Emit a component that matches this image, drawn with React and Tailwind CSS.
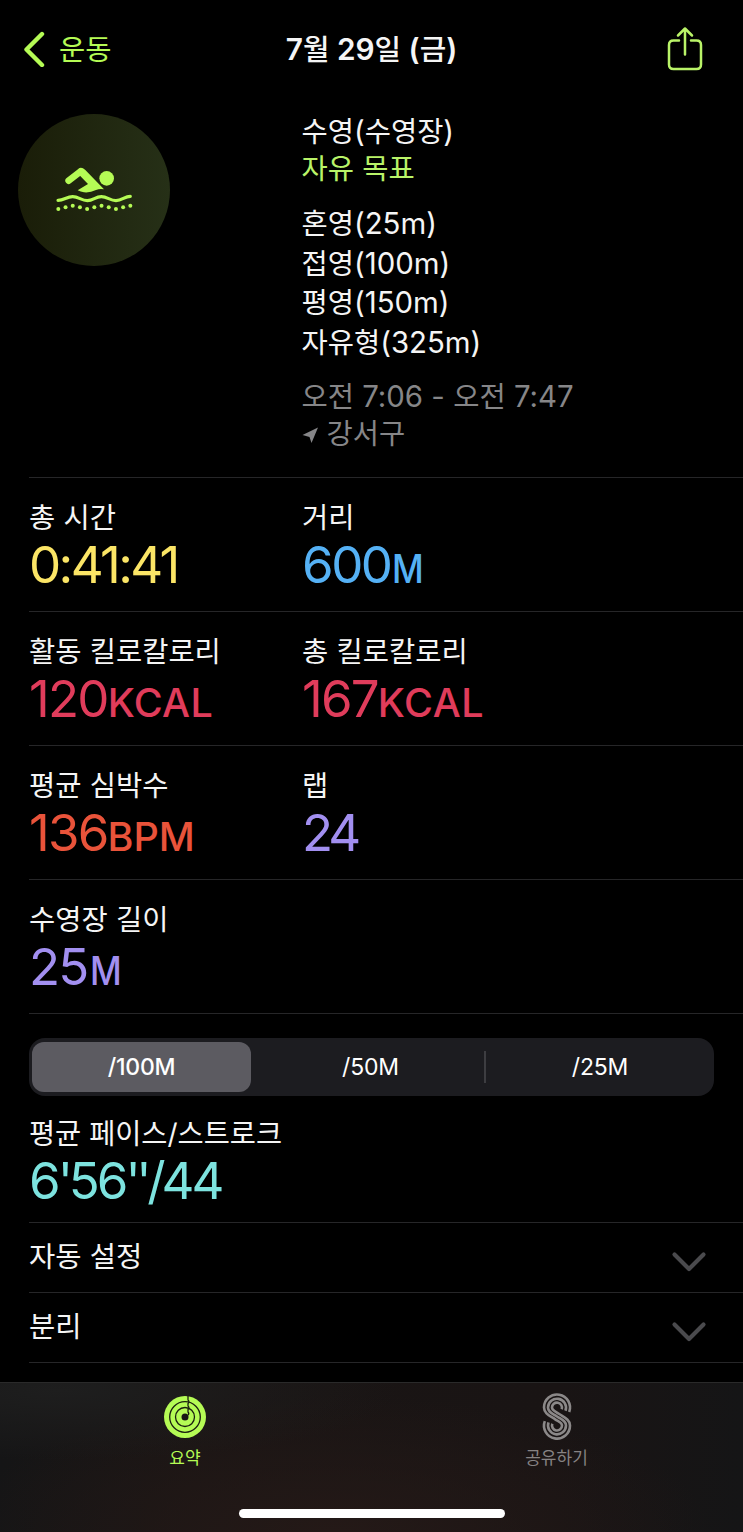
import React from "react";

const HANGUL = /([\u3131-\uD79D]+)/;

// Splits a string so that Hangul and Latin runs each get their own face and size.
function Mixed({ children, ko = "text-[28.5px]", la = "text-[29.4px]" }) {
  return (
    <>
      {children.split(HANGUL).map((part, i) =>
        part === "" ? null : HANGUL.test(part) ? (
          <span key={i} className={`font-['Noto_Sans_CJK_KR',sans-serif] leading-none ${ko}`}>{part}</span>
        ) : (
          <span key={i} className={`leading-none ${la}`}>{part}</span>
        )
      )}
    </>
  );
}

function Line({ children, className = "", ko, la }) {
  return (
    <div className={`h-[40px] whitespace-pre font-['Inter',sans-serif] text-[29px] leading-[40px] ${className}`}>
      <Mixed ko={ko} la={la}>{children}</Mixed>
    </div>
  );
}

function Swimmer() {
  const dots = [174, 169, 164, 169, 174, 169, 164, 169, 174, 169, 164];
  return (
    <svg viewBox="0 0 330 225" className="mb-[4px] ml-[2px] h-[75px] w-[110px]" fill="#b5fb55">
      <path d="M86 89L122 61" stroke="#b5fb55" strokeWidth="20" strokeLinecap="round" fill="none" />
      <path d="M115 54Q126 46 136 57L192 115Q180 112 168 117Q150 126 132 124Q122 123 113 118L144 99L120 74Z" />
      <circle cx="200" cy="82" r="22" />
      <path
        d="M54 148C72 148 80 137 98 137S124 149 142 149S166 137 184 137S210 149 228 149S254 136 271 136"
        stroke="#b5fb55" strokeWidth="9.5" strokeLinecap="round" fill="none"
      />
      {dots.map((y, i) => (
        <circle key={i} cx={55 + i * 21.6} cy={y} r="6" />
      ))}
    </svg>
  );
}

function Rings() {
  return (
    <svg viewBox="0 0 44 44" className="size-[44px]" fill="none">
      <circle cx="22" cy="22" r="21" fill="#b5fb55" />
      <g stroke="#1a1e10" strokeWidth="1.3">
        <circle cx="22" cy="22" r="15.3" />
        <circle cx="22" cy="22" r="9.5" />
        <path d="M25 0.500V5Q26.800 6.500 25 8.500V11Q26.800 12.500 25 14.500V17Q26.500 18.500 25 20" />
      </g>
      <circle cx="22" cy="22" r="3.500" fill="#1a1715" />
    </svg>
  );
}

function SharingS() {
  return (
    <svg viewBox="0 0 32 50" className="h-[50px] w-[32px]" fill="none" stroke="#8b8888" strokeWidth="2.6">
      <path d="M28.2 20A13 13 0 1 0 3 15.600C3 21.500 9 23.800 14.200 27.300C17.500 29.600 21 30.500 21 33.500A5 5 0 1 1 11.300 31.800" />
      <path d="M24.500 18.700A9 9 0 1 0 7 15.600C7 20.500 11.500 21.500 16 24.500C20.500 27.600 25 28.600 25 33.500A9 9 0 1 1 7.500 30.400" />
      <path d="M20.700 17.300A5 5 0 1 0 11 15.600C11 18.600 14.500 19.500 17.800 21.800C23 25.300 29 27.600 29 33.500A13 13 0 1 1 3.800 29.100" />
    </svg>
  );
}

function Stat({ label, value, unit, color, tracking = "tracking-[-1.8px]", unitClass = "" }) {
  return (
    <div className="pt-[20px]">
      <Line>{label}</Line>
      <div className={`-mt-[3px] h-[60px] whitespace-nowrap font-['Inter',sans-serif] text-[51px] leading-[60px] ${color}`}>
        <span className={tracking}>{value}</span>
        {unit && (
          <span className={`inline-block origin-bottom-left text-[39.5px] font-medium leading-none ${unitClass}`}>{unit}</span>
        )}
      </div>
    </div>
  );
}

function Row({ children }) {
  return (
    <div className="ml-[29px] grid h-[134px] shrink-0 grid-cols-[273px_1fr] border-t border-[#262628]">{children}</div>
  );
}

function Disclosure({ label }) {
  return (
    <div className="ml-[29px] flex h-[70px] shrink-0 items-start justify-between border-t border-[#262628] pr-[36px] pt-[14px]">
      <Line>{label}</Line>
      <svg viewBox="0 0 36 22" className="mt-[14px] h-[22px] w-[36px]" fill="none">
        <path d="M3.500 3.500L18 18L32.500 3.500" stroke="#4a4a4d" strokeWidth="4.2" strokeLinecap="round" strokeLinejoin="round" />
      </svg>
    </div>
  );
}

export default function App() {
  return (
    <div className="flex h-[1532px] w-[743px] flex-col overflow-hidden bg-black text-[#f5f5f5]">
      <header className="grid h-[98px] shrink-0 grid-cols-3 items-center">
        <div className="flex items-center gap-[13px] pl-[22px] text-[#b5fb55]">
          <svg viewBox="0 0 24 36" className="h-[36px] w-[24px]" fill="none">
            <path d="M20 3L4.500 18.500L20 34" stroke="currentColor" strokeWidth="4.4" strokeLinecap="round" strokeLinejoin="round" />
          </svg>
          <Line className="mt-[2px]">운동</Line>
        </div>
        <Line className="mt-[2px] text-center font-semibold" ko="text-[28.8px] font-medium" la="text-[29.8px]">7월 29일 (금)</Line>
        <div className="flex justify-end pr-[39px]">
          <svg viewBox="0 0 38 46" className="h-[46px] w-[38px]" fill="none" stroke="#b9f368" strokeWidth="2.500" strokeLinecap="round" strokeLinejoin="round">
            <path d="M13 14.500H7.500Q3 14.500 3 19V38.500Q3 43 7.500 43H30.500Q35 43 35 38.500V19Q35 14.500 30.500 14.500H25" />
            <path d="M19 28.500V3M12 9.500L19 2.500L26 9.500" />
          </svg>
        </div>
      </header>

      <section className="grid h-[379px] shrink-0 grid-cols-[283.5px_1fr] pl-[18px] pt-[14px]">
        <div className="mt-[2px] flex size-[152px] items-center justify-center rounded-full bg-linear-to-r from-[#1a1d08] to-[#263017]">
          <Swimmer />
        </div>
        <div>
          <Line>수영(수영장)</Line>
          <Line className="-mt-[3px] text-[#b9f368]">자유 목표</Line>
          <div className="mt-[15px] grid auto-rows-[39.5px]">
            <Line>혼영(25m)</Line>
            <Line>접영(100m)</Line>
            <Line>평영(150m)</Line>
            <Line>자유형(325m)</Line>
          </div>
          <Line className="mt-[15px] text-[#868688]">오전 7:06 - 오전 7:47</Line>
          <div className="-mt-[3px] flex items-center text-[#868688]">
            <svg viewBox="0 0 17 17" className="mr-[8px] mt-[3px] size-[17px]" fill="currentColor">
              <path d="M16 0.500L9.500 16L7.500 10L0.500 8Z" />
            </svg>
            <Line>강서구</Line>
          </div>
        </div>
      </section>

      <Row>
        <Stat label="총 시간" value="0:41:41" color="text-[#fbe566]" tracking="tracking-[-2.6px]" />
        <Stat label="거리" value="600" unit="M" color="text-[#55b1f5]" tracking="tracking-[-2.5px]" unitClass="ml-[2px] scale-x-88" />
      </Row>
      <Row>
        <Stat label="활동 킬로칼로리" value="120" unit="KCAL" color="text-[#e03c5b]" unitClass="tracking-[0.3px]" />
        <Stat label="총 킬로칼로리" value="167" unit="KCAL" color="text-[#e03c5b]" unitClass="tracking-[0.500px]" />
      </Row>
      <Row>
        <Stat label="평균 심박수" value="136" unit="BPM" color="text-[#e9533a]" />
        <Stat label="랩" value="24" color="text-[#a28ff0]" tracking="tracking-[-4px]" />
      </Row>
      <Row>
        <Stat label="수영장 길이" value="25" unit="M" color="text-[#a28ff0]" unitClass="ml-[2px] scale-x-88" />
      </Row>

      <section className="ml-[29px] h-[209px] shrink-0 border-t border-[#262628] pt-[24px]">
        <div className="flex h-[58px] w-[685px] items-center rounded-[16px] bg-[#1c1c20] p-[3px] font-['Inter',sans-serif] text-[23px] tracking-[-0.2px] text-white">
          <div className="flex h-[50px] w-[219px] items-center justify-center rounded-[12px] bg-[#5c5b61] pt-px font-medium">/100M</div>
          <div className="flex-1 pl-[6px] pt-px text-center">/50M</div>
          <div className="h-[32px] w-[2px] bg-[#3d3d41]" />
          <div className="w-[225px] pl-[3px] pt-px text-center">/25M</div>
        </div>
        <div className="pt-[18px]">
          <Line ko="text-[28.4px]" la="text-[28px]">평균 페이스/스트로크</Line>
          <div className="-mt-[3px] h-[60px] whitespace-nowrap font-['Inter',sans-serif] text-[51px] leading-[60px] tracking-[-3px] text-[#7de3df]">
            6<span className="tracking-[-4.2px]">'</span>56<span className="tracking-[-4.3px]">''/</span>44
          </div>
        </div>
      </section>

      <Disclosure label="자동 설정" />
      <Disclosure label="분리" />
      <div className="ml-[29px] h-[20px] shrink-0 border-t border-[#262628]" />

      <nav className="flex h-[150px] shrink-0 flex-col border-t border-[#2a2a2a] bg-[#191515] bg-[radial-gradient(ellipse_at_8%_5%,#1e1e1e_0%,transparent_35%),radial-gradient(ellipse_at_45%_100%,#241917_0%,transparent_65%),linear-gradient(to_right,#151516_0%,#1a1514_25%,#191414_75%,#151516_100%)]">
        <div className="grid grid-cols-2 pr-px pt-[9px]">
          <div className="flex flex-col items-center pr-px text-[#b5fb55]">
            <div className="flex h-[50px] items-center"><Rings /></div>
            <span className="font-['Noto_Sans_CJK_KR',sans-serif] text-[17px] leading-[30px]">요약</span>
          </div>
          <div className="flex flex-col items-center text-[#868283]">
            <SharingS />
            <span className="font-['Noto_Sans_CJK_KR',sans-serif] text-[17px] leading-[30px]">공유하기</span>
          </div>
        </div>
        <div className="mx-auto mt-auto mb-[14px] h-[9px] w-[266px] rounded-full bg-white" />
      </nav>
    </div>
  );
}
